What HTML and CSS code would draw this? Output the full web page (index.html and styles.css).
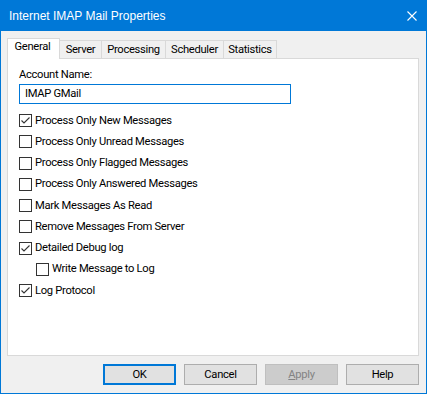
FILE: index.html
```html
<!DOCTYPE html>
<html>
<head>
<meta charset="utf-8">
<link rel="stylesheet" href="styles.css">
</head>
<body>
<div class="window">
  <div class="titlebar">
    <span class="title">Internet IMAP Mail Properties</span>
    <svg class="close" width="10" height="10" viewBox="0 0 10 10"><path d="M0.5 0.5L9.5 9.5M9.5 0.5L0.5 9.5" stroke="#fff" stroke-width="1.1" fill="none"/></svg>
  </div>
  <div class="client">
    <div class="tabs">
      <div class="tab active t-general">General</div>
      <div class="tab t-server">Server</div>
      <div class="tab t-processing">Processing</div>
      <div class="tab t-scheduler">Scheduler</div>
      <div class="tab t-statistics">Statistics</div>
    </div>
    <div class="panel">
      <div class="label">Account Name:</div>
      <div class="edit">IMAP GMail</div>
      <div class="checks">
        <div class="row"><span class="box checked"><svg width="11" height="11" viewBox="0 0 11 11"><path d="M1.5 5.5L4 8L9.5 2.5" stroke="#333" stroke-width="1.1" fill="none"/></svg></span><span>Process Only New Messages</span></div>
        <div class="row"><span class="box"></span><span>Process Only Unread Messages</span></div>
        <div class="row"><span class="box"></span><span>Process Only Flagged Messages</span></div>
        <div class="row"><span class="box"></span><span>Process Only Answered Messages</span></div>
        <div class="row"><span class="box"></span><span>Mark Messages As Read</span></div>
        <div class="row"><span class="box"></span><span>Remove Messages From Server</span></div>
        <div class="row"><span class="box checked"><svg width="11" height="11" viewBox="0 0 11 11"><path d="M1.5 5.5L4 8L9.5 2.5" stroke="#333" stroke-width="1.1" fill="none"/></svg></span><span>Detailed Debug log</span></div>
        <div class="row indent"><span class="box"></span><span>Write Message to Log</span></div>
        <div class="row"><span class="box checked"><svg width="11" height="11" viewBox="0 0 11 11"><path d="M1.5 5.5L4 8L9.5 2.5" stroke="#333" stroke-width="1.1" fill="none"/></svg></span><span>Log Protocol</span></div>
      </div>
    </div>
    <div class="buttons">
      <div class="btn default">OK</div>
      <div class="btn">Cancel</div>
      <div class="btn disabled"><u>A</u>pply</div>
      <div class="btn">Help</div>
    </div>
  </div>
</div>
</body>
</html>
```
FILE: styles.css
```css
html, body {
  margin: 0;
  padding: 0;
  background: #f0f0f0;
}
body {
  font-family: Roboto, "Liberation Sans", Arial, sans-serif;
  font-size: 11.2px;
  letter-spacing: -0.3px;
  color: #000;
}
.window {
  width: 427px;
  height: 394px;
  box-sizing: border-box;
  border: 1px solid #0078d7;
  border-top: none;
  display: flex;
  flex-direction: column;
}
.titlebar {
  height: 31px;
  margin: 0 -1px;
  background: #0078d7;
  color: #fff;
  display: flex;
  align-items: center;
  justify-content: space-between;
  padding: 0 10px 0 9px;
  flex-shrink: 0;
}
.title {
  font-family: "Liberation Sans", Arial, sans-serif;
  font-size: 12px;
  letter-spacing: 0;
  line-height: 16px;
  padding-top: 1px;
}
.close {
  display: block;
}
.client {
  flex: 1;
  display: flex;
  flex-direction: column;
  background: #f0f0f0;
}
.tabs {
  display: flex;
  align-items: flex-end;
  margin-top: 7px;
  margin-left: 6px;
  height: 20px;
}
.tab {
  box-sizing: border-box;
  height: 18px;
  border-top: 1px solid #d9d9d9;
  border-right: 1px solid #d9d9d9;
  background: #f0f0f0;
  text-align: center;
  line-height: 17px;
}
.tab.active {
  height: 21px;
  border-left: 1px solid #d9d9d9;
  background: #fff;
  position: relative;
  z-index: 1;
  margin-bottom: -1px;
  line-height: 16px;
  padding-right: 2px;
}
.t-general { width: 53px; }
.t-server { width: 42px; }
.t-processing { width: 64px; }
.t-scheduler { width: 58px; }
.t-statistics { width: 53px; }
.panel {
  box-sizing: border-box;
  margin-left: 6px;
  width: 412px;
  height: 298px;
  border: 1px solid #d9d9d9;
  background: #fff;
  padding: 8px 11px 0;
}
.label {
  line-height: 16px;
}
.edit {
  box-sizing: border-box;
  margin-top: 1px;
  width: 272px;
  height: 20px;
  border: 1px solid #0078d7;
  padding-left: 5px;
  line-height: 18px;
}
.checks {
  margin-top: 6px;
  display: flex;
  flex-direction: column;
}
.row {
  height: 21.25px;
  display: flex;
  align-items: center;
  gap: 3px;
  line-height: 16px;
}
.row.indent {
  margin-left: 17px;
}
.box {
  box-sizing: border-box;
  width: 13px;
  height: 13px;
  border: 1px solid #333;
  background: #fff;
  display: flex;
  align-items: center;
  justify-content: center;
  flex-shrink: 0;
}
.box svg {
  display: block;
}
.buttons {
  display: flex;
  justify-content: flex-end;
  gap: 8px;
  margin-top: 8px;
  padding-right: 7px;
}
.btn {
  box-sizing: border-box;
  width: 73px;
  height: 21px;
  border: 1px solid #adadad;
  background: #e1e1e1;
  text-align: center;
  line-height: 19px;
}
.btn.default {
  border: 2px solid #0078d7;
  line-height: 17px;
}
.btn.disabled {
  background: #cccccc;
  border-color: #bfbfbf;
  color: #838383;
}
```
